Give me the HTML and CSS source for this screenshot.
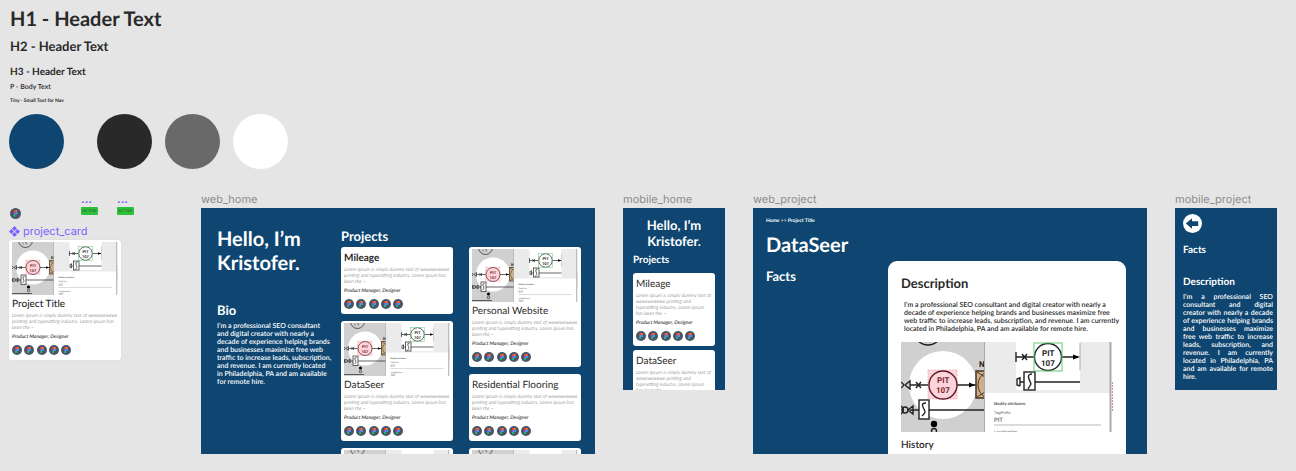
FILE: index.html
```html
<!DOCTYPE html>
<html lang="en">
<head>
<meta charset="utf-8">
<title>Portfolio design board</title>
<link rel="stylesheet" href="styles.css">
</head>
<body>
<svg class="defs" aria-hidden="true">
  <symbol id="tool" viewBox="0 0 20 20">
    <circle cx="10" cy="10" r="10" fill="#4b5566"/>
    <path d="M10 4H8.2a2 2 0 0 0 0 4H10z" fill="#f24e1e"/>
    <path d="M10 4h1.8a2 2 0 0 1 0 4H10z" fill="#ff6a50"/>
    <path d="M10 8H8.2a2 2 0 0 0 0 4H10z" fill="#a259ff"/>
    <circle cx="12" cy="10" r="2" fill="#1abcfe"/>
    <path d="M10 12H8.2a2 2 0 1 0 1.8 2z" fill="#0acf83"/>
  </symbol>
  <symbol id="diagram" viewBox="0 0 212 106" preserveAspectRatio="xMidYMid slice">
    <rect width="212" height="106" fill="#fff"/>
    <rect width="84" height="106" fill="#d0d0d0"/>
    <circle cx="42" cy="51" r="34" fill="#fff"/>
    <g fill="none" stroke="#222" stroke-width="1.4">
      <circle cx="27" cy="-3" r="14"/>
      <path d="M9 51h19M56 51h20M9 76h9M28 76h56M0 103h40"/>
      <path d="M0 48q5 3 0 6M9 47v8l-5-4zM15 48l5 6M20 48l-5 6"/>
      <path d="M0 72q5 4 0 8M12 72v8l-5-4z"/>
      <circle cx="4" cy="76" r="3"/>
      <rect x="18" y="66" width="10" height="19" fill="#fff"/>
      <path d="M25 69q-5 0-3 4t2 5-3 4"/>
      <circle cx="33" cy="97" r="2.5"/>
    </g>
    <rect x="27" y="36" width="29" height="29" fill="#fbd5da" stroke="#ee9aa5" stroke-width=".6" stroke-dasharray="2 1"/>
    <circle cx="42" cy="51" r="14" fill="none" stroke="#5d1825" stroke-width="1.4"/>
    <path d="M68 48.500l6 2.500-6 2.500z"/>
    <circle cx="33" cy="90" r="3.200"/>
    <path d="M75 37h10v27H75z" fill="#cfb08d" stroke="#4a3420" stroke-width="1.500"/>
    <path d="M85 38q-8 5-8 13t8 13M76 38l8 5M76 63l8-5" fill="none" stroke="#4a3420"/>
    <g class="tag">
      <text x="78" y="33">N</text>
      <g fill="#7a1f2e"><text x="36" y="49">PIT</text><text x="35" y="59">107</text></g>
    </g>
    <path d="M22 1v4M26 2q4-3 3 3" fill="none" stroke="#222"/>
    <rect x="84" width="125" height="106" fill="#fff"/>
    <rect x="83" width="1" height="106" fill="#aaa"/>
    <rect x="84" width="125" height="59" fill="#ebebeb"/>
    <rect x="115" width="64" height="56" fill="#fff"/>
    <g fill="none" stroke="#222" stroke-width="1.400">
      <path d="M115 18v10M115 23h18M161 23h16M121 20l5 6M126 20l-5 6M134 48h45M119 43v9M119 44l-3 1v6l3 1M119 48h4"/>
      <path d="M179 9v27" stroke="#999" stroke-width=".8"/>
      <circle cx="147" cy="23" r="13.500"/>
      <rect x="123" y="38" width="11" height="18" fill="#fff"/>
      <path d="M131 40q-5 0-3 5t2 5-3 5"/>
    </g>
    <path d="M172 20.500l7 2.500-7 2.500z"/>
    <rect x="133" y="9" width="28" height="28" fill="none" stroke="#62c776"/>
    <g class="tag"><text x="141" y="22">PIT</text><text x="140" y="32">107</text></g>
    <g class="fine">
      <text x="93" y="71" font-weight="700">Modify attributes:</text>
      <text x="93" y="80">TagPrefix</text>
      <text x="93" y="88" class="value">PIT</text>
      <text x="93" y="99">LoopNumber</text>
      <text x="93" y="105" class="value">107</text>
    </g>
    <path d="M93 91h107" stroke="#999" stroke-width=".7"/>
    <path d="M209.500 0v106" stroke="#aaa" stroke-width="2"/>
    <path d="M211.500 48v30" stroke="#d98b99" stroke-dasharray="2 1"/>
  </symbol>
</svg>

<main class="board">
  <section class="type-scale">
    <h1 class="h1">H1 - Header Text</h1>
    <h2 class="h2">H2 - Header Text</h2>
    <h3 class="h3">H3 - Header Text</h3>
    <p class="body-sample">P - Body Text</p>
    <p class="tiny-sample">Tiny - Small Text for Nav</p>
  </section>
  <section class="swatches" aria-label="Colours">
    <span class="swatch blue"></span>
    <span class="swatch black"></span>
    <span class="swatch gray"></span>
    <span class="swatch white"></span>
  </section>

  <div class="frames">
    <section class="components">
      <div class="parts">
        <svg class="tool"><use href="#tool"/></svg>
        <div class="state"><span class="dots">...</span><span class="badge">ACTIVE</span></div>
        <div class="state"><span class="dots">...</span><span class="badge">ACTIVE</span></div>
      </div>
      <p class="component-name">
        <svg class="component-mark" viewBox="0 0 12 12" aria-hidden="true"><path d="M6 0l2.700 2.700L6 5.400 3.300 2.700zM6 6.600l2.700 2.700L6 12 3.300 9.300zM2.700 3.300L5.400 6 2.700 8.700 0 6zM9.300 3.300L12 6 9.300 8.700 6.600 6z"/></svg>project_card
      </p>
      <article class="card sample">
        <svg class="shot"><use href="#diagram"/></svg>
        <h3 class="card-title medium">Project Title</h3>
        <p class="blurb">Lorem Ipsum is simply dummy text of wewewewewe printing and typesetting industry. Lorem Ipsum has been the ~</p>
        <p class="role">Product Manager, Designer</p>
        <div class="tools"><svg class="tool"><use href="#tool"/></svg><svg class="tool"><use href="#tool"/></svg><svg class="tool"><use href="#tool"/></svg><svg class="tool"><use href="#tool"/></svg><svg class="tool"><use href="#tool"/></svg></div>
      </article>
    </section>

    <section>
      <p class="frame-name">web_home</p>
      <div class="frame web web-home">
        <div class="intro">
          <h1 class="h1">Hello, I’m<br>Kristofer.</h1>
          <h2 class="h2">Bio</h2>
          <p class="copy">I’m a professional SEO consultant<br>and digital creator with nearly a<br>decade of experience helping brands<br>and businesses maximize free web<br>traffic to increase leads, subscription,<br>and revenue. I am currently located<br>in Philadelphia, PA and am available<br>for remote hire.</p>
        </div>
        <div class="projects">
          <h2 class="h2">Projects</h2>
          <div class="stack">
            <article class="card">
              <h3 class="card-title strong">Mileage</h3>
              <p class="blurb">Lorem Ipsum is simply dummy text of wewewewewe printing and typesetting industry. Lorem Ipsum has been the ~</p>
              <p class="role">Product Manager, Designer</p>
              <div class="tools"><svg class="tool"><use href="#tool"/></svg><svg class="tool"><use href="#tool"/></svg><svg class="tool"><use href="#tool"/></svg><svg class="tool"><use href="#tool"/></svg><svg class="tool"><use href="#tool"/></svg></div>
            </article>
            <article class="card">
              <svg class="shot"><use href="#diagram"/></svg>
              <h3 class="card-title">DataSeer</h3>
              <p class="blurb">Lorem Ipsum is simply dummy text of wewewewewe printing and typesetting industry. Lorem Ipsum has been the ~</p>
              <p class="role">Product Manager, Designer</p>
              <div class="tools"><svg class="tool"><use href="#tool"/></svg><svg class="tool"><use href="#tool"/></svg><svg class="tool"><use href="#tool"/></svg><svg class="tool"><use href="#tool"/></svg><svg class="tool"><use href="#tool"/></svg></div>
            </article>
            <article class="card"><svg class="shot"><use href="#diagram"/></svg></article>
          </div>
          <div class="stack">
            <article class="card">
              <svg class="shot"><use href="#diagram"/></svg>
              <h3 class="card-title">Personal Website</h3>
              <p class="blurb">Lorem Ipsum is simply dummy text of wewewewewe printing and typesetting industry. Lorem Ipsum has been the ~</p>
              <p class="role">Product Manager, Designer</p>
              <div class="tools"><svg class="tool"><use href="#tool"/></svg><svg class="tool"><use href="#tool"/></svg><svg class="tool"><use href="#tool"/></svg><svg class="tool"><use href="#tool"/></svg><svg class="tool"><use href="#tool"/></svg></div>
            </article>
            <article class="card">
              <h3 class="card-title">Residential Flooring</h3>
              <p class="blurb">Lorem Ipsum is simply dummy text of wewewewewe printing and typesetting industry. Lorem Ipsum has been the ~</p>
              <p class="role">Product Manager, Designer</p>
              <div class="tools"><svg class="tool"><use href="#tool"/></svg><svg class="tool"><use href="#tool"/></svg><svg class="tool"><use href="#tool"/></svg><svg class="tool"><use href="#tool"/></svg><svg class="tool"><use href="#tool"/></svg></div>
            </article>
            <article class="card"><svg class="shot"><use href="#diagram"/></svg></article>
          </div>
        </div>
      </div>
    </section>

    <section>
      <p class="frame-name">mobile_home</p>
      <div class="frame mobile mobile-home">
        <h1 class="hello">Hello, I’m<br>Kristofer.</h1>
        <h2 class="h3">Projects</h2>
        <div class="stack">
          <article class="card">
            <h3 class="card-title">Mileage</h3>
            <p class="blurb">Lorem Ipsum is simply dummy text of wewewewewe printing and typesetting industry. Lorem Ipsum has been the ~</p>
            <p class="role">Product Manager, Designer</p>
            <div class="tools"><svg class="tool"><use href="#tool"/></svg><svg class="tool"><use href="#tool"/></svg><svg class="tool"><use href="#tool"/></svg><svg class="tool"><use href="#tool"/></svg><svg class="tool"><use href="#tool"/></svg></div>
          </article>
          <article class="card">
            <h3 class="card-title">DataSeer</h3>
            <p class="blurb">Lorem Ipsum is simply dummy text of wewewewewe printing and typesetting industry. Lorem Ipsum has been the ~</p>
          </article>
        </div>
      </div>
    </section>

    <section>
      <p class="frame-name">web_project</p>
      <div class="frame web web-project">
        <div class="summary">
          <nav class="crumbs"><a href="#">Home</a> &gt;&gt; <a href="#">Project Title</a></nav>
          <h1 class="h1">DataSeer</h1>
          <h2 class="h2">Facts</h2>
        </div>
        <article class="panel">
          <h2 class="h2">Description</h2>
          <p class="copy">I’m a professional SEO consultant and digital creator with nearly a<br>decade of experience helping brands and businesses maximize free<br>web traffic to increase leads, subscription, and revenue. I am currently<br>located in Philadelphia, PA and am available for remote hire.</p>
          <svg class="shot"><use href="#diagram"/></svg>
          <h3 class="h3">History</h3>
        </article>
      </div>
    </section>

    <section>
      <p class="frame-name">mobile_project</p>
      <div class="frame mobile mobile-project">
        <button class="back" type="button" aria-label="Back"><svg viewBox="0 0 20 20" aria-hidden="true"><path d="M3 10L9.500 4.500V7.500h6.500v5H9.500v3z"/></svg></button>
        <h2 class="h3">Facts</h2>
        <h2 class="h3">Description</h2>
        <p class="copy">I’m a professional SEO consultant and digital creator with nearly a decade of experience helping brands and businesses maximize free web traffic to increase leads, subscription, and revenue. I am currently located in Philadelphia, PA and am available for remote hire.</p>
      </div>
    </section>
  </div>
</main>
</body>
</html>
```
FILE: styles.css
```css
* { box-sizing: border-box; }
body {
  margin: 0;
  background: #e5e5e5;
  color: #292929;
  font-family: Lato, "Liberation Sans", sans-serif;
  text-rendering: geometricPrecision;
}
h1, h2, h3, p { margin: 0; }
svg { display: block; }
.defs { position: absolute; width: 0; height: 0; }
.board { padding: 7px 19px 17px 9px; }

.h1 { font-size: 20px; line-height: 24px; font-weight: 700; }
.h2 { font-size: 13px; line-height: 18px; font-weight: 700; }
.h3 { font-size: 10px; line-height: 14px; font-weight: 700; }
.copy { font-size: 7px; line-height: 8px; font-weight: 600; }

.type-scale { padding-left: 1px; }
.type-scale .h2 { margin-top: 6px; }
.type-scale .h3 { margin-top: 10px; }
.body-sample { margin-top: 4px; font-size: 7px; line-height: 8px; font-weight: 600; }
.tiny-sample { margin-top: 7px; font-size: 5px; line-height: 6px; font-weight: 700; }

.swatches { display: flex; gap: 13px; margin-top: 10px; }
.swatch { width: 55px; height: 55px; border-radius: 50%; }
.blue { background: #0e4671; margin-right: 20px; }
.black { background: #292929; }
.gray { background: #696969; }
.white { background: #fff; }

.frames {
  display: grid;
  grid-template-columns: minmax(0, 164fr) minmax(0, 394fr) minmax(0, 102fr) minmax(0, 394fr) minmax(0, 102fr);
  gap: 28px;
  margin-top: 23px;
}
.frame-name {
  font: 11px/14px Inter, sans-serif;
  color: #8c8c8c;
  margin-bottom: 2px;
  white-space: nowrap;
}
.frame { background: #0e4671; color: #fff; overflow: hidden; }
.web { height: 246px; }
.mobile { height: 182px; }

.parts { display: flex; align-items: flex-end; gap: 19px; padding-left: 1px; height: 27px; }
.parts .tool { margin-right: 41px; width: 11px; height: 11px; }
.state { display: flex; flex-direction: column; height: 25px; }
.dots { color: #7b61ff; font: 700 11px/11px Inter, sans-serif; }
.badge {
  margin-top: 2px;
  width: 17px;
  border-radius: 1px;
  background: #2fbf3b;
  color: #1d5a24;
  font-size: 4px;
  line-height: 8px;
  text-align: center;
}
.component-name {
  display: flex;
  align-items: center;
  gap: 3px;
  margin: 5px 0 2px;
  color: #7b61ff;
  font: 11px/14px Inter, sans-serif;
}
.component-mark { width: 11px; height: 11px; fill: #7b61ff; }

.card {
  padding: 4px 3px 5px;
  border-radius: 3px;
  background: #fff;
  color: #292929;
}
.card:has(.shot) { padding-top: 2px; }
.sample { max-width: 112px; box-shadow: 0 0 2px #0001; }
.shot { width: 100%; height: auto; aspect-ratio: 2; }
.card .shot { margin-bottom: 2px; }
.card-title { font-size: 10px; line-height: 14px; font-weight: 400; white-space: nowrap; }
.medium { font-weight: 500; }
.strong { font-weight: 700; }
.blurb { margin-top: 2px; color: #555; font-size: 5px; line-height: 6px; font-style: italic; font-weight: 300; }
.role { margin-top: 3px; font-size: 5px; line-height: 6px; font-style: italic; font-weight: 500; }
.tools { display: flex; justify-content: space-between; width: 59px; margin-top: 5px; }
.tool { width: 10px; height: 10px; }
.tag { font: 700 8px Roboto, sans-serif; fill: #222; }
.fine { font: 4px Roboto, sans-serif; fill: #666; }
.value { font-size: 6px; fill: #444; }

.stack { display: flex; flex-direction: column; gap: 7px; }
.web-home {
  display: grid;
  grid-template-columns: minmax(0, 108fr) minmax(0, 240fr);
  gap: 16px;
  padding: 19px 14px 0 16px;
}
.intro .h2 { margin-top: 26px; }
.intro .copy { margin-top: 3px; white-space: nowrap; }
.projects { display: grid; grid-template-columns: 1fr 1fr; gap: 2px 16px; align-items: start; }
.projects > .h2 { grid-column: 1 / -1; }

.mobile-home { padding: 9px 10px 0; }
.hello { font-size: 13px; line-height: 16px; font-weight: 700; text-align: center; }
.mobile-home .h3 { margin: 4px 0 6px; }
.mobile-home .stack { gap: 4px; }

.web-project {
  display: grid;
  grid-template-columns: minmax(0, 122fr) minmax(0, 238fr);
  padding: 0 21px 0 13px;
}
.summary { padding-top: 10px; }
.crumbs { font-size: 5px; line-height: 6px; font-weight: 700; }
.crumbs a { color: inherit; text-decoration: none; }
.summary .h1 { margin-top: 9px; }
.summary .h2 { margin-top: 10px; }
.panel {
  margin-top: 53px;
  padding: 13px 13px 0;
  border-radius: 9px 9px 0 0;
  background: #fff;
  color: #292929;
}
.panel .copy { padding: 0 3px; margin: 9px 0; white-space: nowrap; }
.panel .shot { aspect-ratio: 212 / 90; }
.panel .h3 { margin-top: 6px; font-weight: 600; }

.mobile-project { padding: 6px 4px 0 8px; }
.back { display: block; width: 19px; height: 19px; padding: 0; border: 0; border-radius: 50%; background: #fff; }
.back svg { width: 19px; height: 19px; fill: #0e4671; }
.mobile-project .h3 { margin-top: 10px; }
.mobile-project .h3 + .h3 { margin-top: 18px; }
.mobile-project .copy { margin-top: 4px; text-align: justify; }
```
